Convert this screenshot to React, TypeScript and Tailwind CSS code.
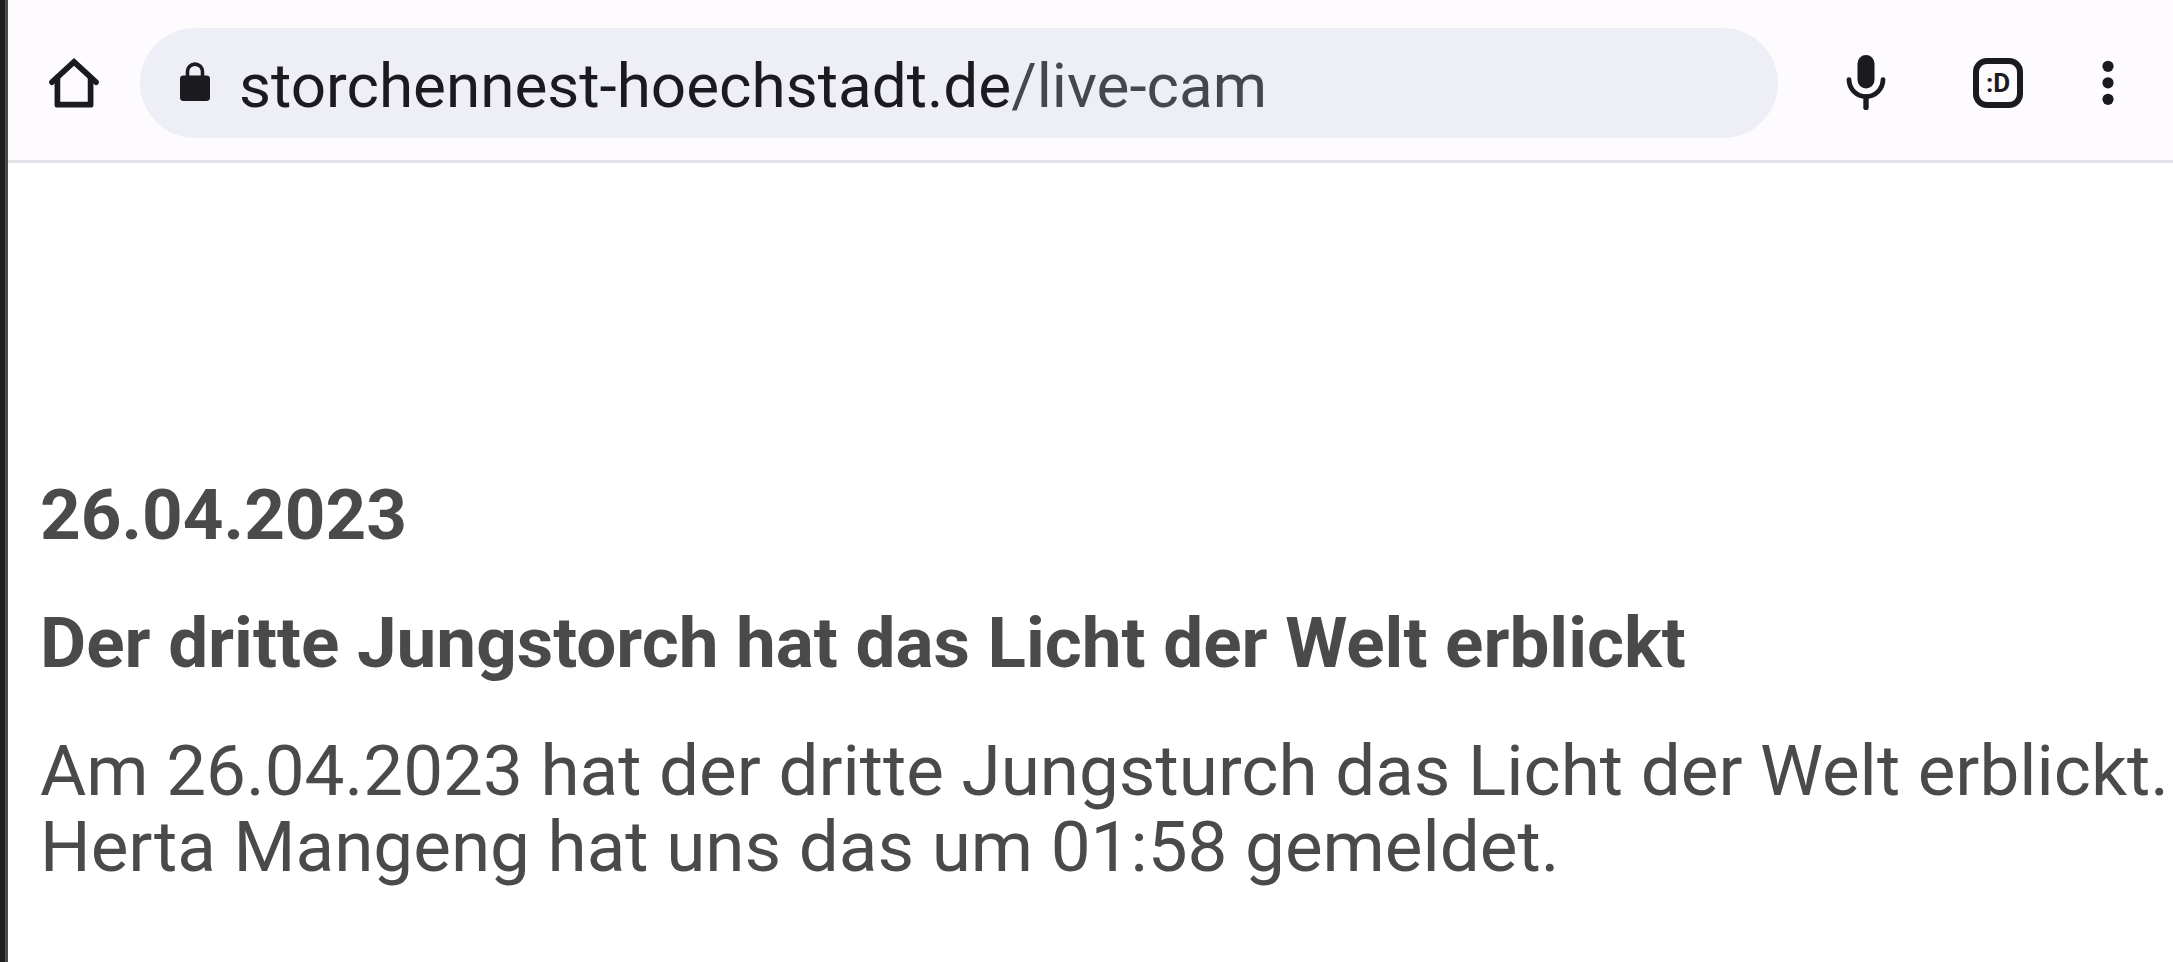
import React from 'react';

function HomeIcon() {
  return (
    <svg viewBox="0 0 66 66" className="w-[66px] h-[66px]" fill="none" stroke="currentColor" strokeWidth="5.7" strokeLinecap="round" strokeLinejoin="round" aria-hidden="true">
      <path d="M11 32.2 33 11.8l22 20.4" strokeLinejoin="miter" />
      <path d="M16.4 28v26.7h33.2V28" />
    </svg>
  );
}

function LockIcon() {
  return (
    <svg viewBox="0 0 30 44" className="w-[30px] h-11 shrink-0" aria-hidden="true">
      <rect x="0" y="14.4" width="30" height="25.6" rx="3.4" fill="currentColor" />
      <path d="M7.5 16v-5.4a7.5 7.5 0 0 1 15 0V16" fill="none" stroke="currentColor" strokeWidth="3.6" />
    </svg>
  );
}

function MicIcon() {
  return (
    <svg viewBox="0 0 66 66" className="w-[66px] h-[66px]" fill="none" stroke="currentColor" strokeLinecap="round" aria-hidden="true">
      <rect x="24.5" y="5" width="17" height="33.6" rx="8.5" fill="currentColor" stroke="none" />
      <path d="M16 29.6a17 17 0 0 0 34 0" strokeWidth="4.8" />
      <path d="M33 47v10.4" strokeWidth="5.4" />
    </svg>
  );
}

function MenuIcon() {
  return (
    <svg viewBox="0 0 66 66" className="w-[66px] h-[66px]" fill="currentColor" aria-hidden="true">
      <circle cx="33" cy="16.3" r="5.6" />
      <circle cx="33" cy="32.8" r="5.6" />
      <circle cx="33" cy="49.3" r="5.6" />
    </svg>
  );
}

function Toolbar() {
  return (
    <header className="flex items-center bg-[#fefbff] border-b-3 border-[#e3e2e9] pt-7 pb-[22px] pr-[21px] text-[#1b1b1f]">
      <button type="button" aria-label="Startseite" className="w-[132px] h-[110px] shrink-0 flex items-center justify-center">
        <HomeIcon />
      </button>

      <label className="flex-1 min-w-0 h-[110px] flex items-center gap-[29px] rounded-full bg-[#edeef6] pl-10 pr-10 mr-[22px]">
        <LockIcon />
        {/* Host is dark, path is lighter */}
        <input
          type="text"
          aria-label="Adresse"
          defaultValue="storchennest-hoechstadt.de/live-cam"
          spellCheck={false}
          className="flex-1 min-w-0 h-20 pt-1 text-[62px] leading-[76px] text-transparent caret-[#1b1b1f] outline-none bg-clip-text bg-[linear-gradient(to_right,#1b1b1f_770px,#46464f_770px)]"
        />
      </label>

      <button type="button" aria-label="Sprachsuche" className="w-[132px] h-[110px] shrink-0 flex items-center justify-center">
        <MicIcon />
      </button>
      <button type="button" aria-label="Tabs" className="w-[132px] h-[110px] shrink-0 flex items-center justify-center">
        <span className="w-[50px] h-[50px] flex items-center justify-center border-6 border-[#1b1b1f] rounded-[14px] font-bold text-[26px] leading-7">
          :D
        </span>
      </button>
      <button type="button" aria-label="Menü" className="w-[88px] h-[110px] shrink-0 flex items-center justify-center">
        <MenuIcon />
      </button>
    </header>
  );
}

export default function App() {
  return (
    <div className="min-h-screen flex bg-white font-[Roboto,sans-serif]">
      <div className="w-2 shrink-0 bg-[#1f1f1f] border-r-3 border-[#4b4b4a]" />

      <div className="flex-1 min-w-0 overflow-hidden">
        <Toolbar />

        <main className="pt-[314px] pl-8 flex flex-col gap-[52px] text-[71px] leading-[76px] text-[#4a4a4a] whitespace-nowrap">
          <h2 className="font-bold">26.04.2023</h2>
          <h1 className="font-bold">Der dritte Jungstorch hat das Licht der Welt erblickt</h1>
          <p>
            Am 26.04.2023 hat der dritte Jungsturch das Licht der Welt erblickt.
            <br />
            Herta Mangeng hat uns das um 01:58 gemeldet.
          </p>
        </main>
      </div>
    </div>
  );
}
